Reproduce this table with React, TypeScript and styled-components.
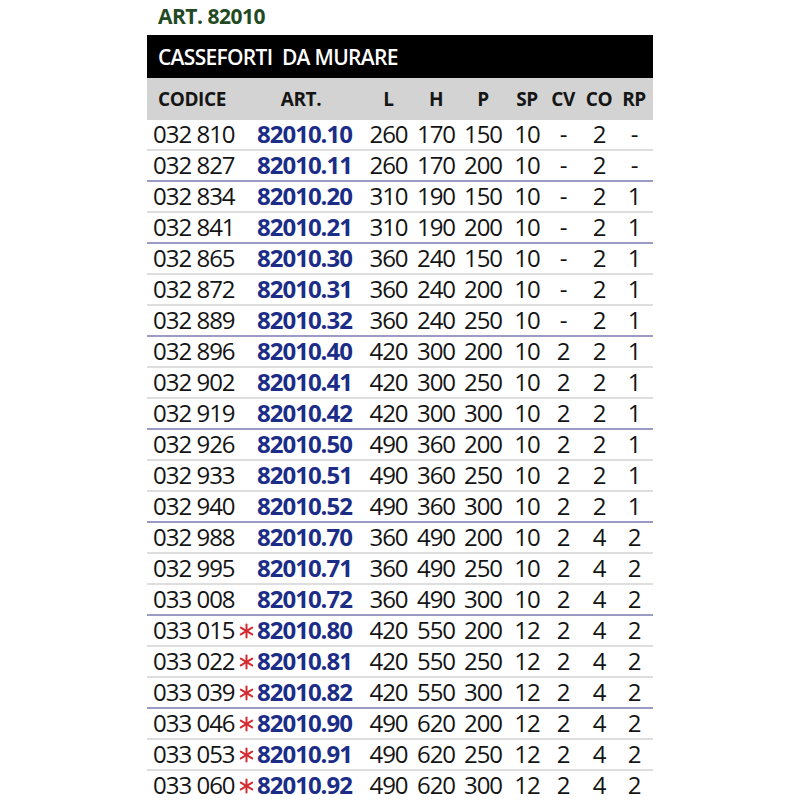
import styled, { createGlobalStyle } from 'styled-components';

const GlobalStyle = createGlobalStyle`
  html, body {
    margin: 0;
    padding: 0;
    background: #ffffff;
  }
  body {
    font-family: "Open Sans", "Noto Sans", sans-serif;
    color: #141414;
  }
`;

const Page = styled.div`
  width: 800px;
  height: 800px;
  overflow: hidden;
  display: flex;
  flex-direction: column;
  align-items: flex-start;
  padding-left: 147px;
  box-sizing: border-box;
`;

const Title = styled.h1`
  margin: 0;
  height: 35px;
  flex-shrink: 0;
  padding-left: 11px;
  font-size: 21px;
  font-weight: 700;
  line-height: 33px;
  letter-spacing: -0.5px;
  color: #1f4a22;
`;

const Table = styled.div`
  width: 506px;
  display: flex;
  flex-direction: column;
  flex-shrink: 0;
`;

const Banner = styled.div`
  height: 43px;
  flex-shrink: 0;
  background: #000000;
  color: #ffffff;
  padding-left: 11px;
  display: flex;
  align-items: center;
  font-size: 21px;
  font-weight: 600;
  letter-spacing: -0.7px;
  white-space: pre;
`;

const cols = '90px 19px 109px 47px 48px 46px 42px 30px 42px 28px';

const HeadRow = styled.div`
  height: 42px;
  flex-shrink: 0;
  background: #d3d3d3;
  display: grid;
  grid-template-columns: ${cols};
  align-items: center;
  font-size: 19px;
  font-weight: 700;
  letter-spacing: -0.4px;
  color: #151515;
`;

const HeadCell = styled.div<{ $span?: number }>`
  grid-column: span ${({ $span }) => $span ?? 1};
  text-align: center;
`;

const Row = styled.div<{ $groupEnd: boolean }>`
  height: 29px;
  flex-shrink: 0;
  display: grid;
  grid-template-columns: ${cols};
  align-items: center;
  font-size: 24px;
  letter-spacing: -1px;
  border-bottom: 2px solid ${({ $groupEnd }) => ($groupEnd ? '#9b9bc6' : '#dedede')};
`;

const Code = styled.div`
  padding-left: 6px;
  white-space: nowrap;
  line-height: 1;
  margin-top: -2px;
`;

const Mark = styled.div`
  display: flex;
  align-items: center;
  justify-content: center;
`;

const Art = styled.div`
  padding-left: 1px;
  font-weight: 700;
  color: #1c2d88;
  line-height: 1;
  margin-top: -2px;
`;

const Num = styled.div`
  text-align: center;
  line-height: 1;
  margin-top: -2px;
`;

const Star = () => (
  <svg width="15" height="16" viewBox="0 0 15 16">
    <g stroke="#d42a30" strokeWidth="2" strokeLinecap="round">
      <line x1="7.5" y1="1.5" x2="7.5" y2="14.5" />
      <line x1="1.8" y1="4.6" x2="13.2" y2="11.4" />
      <line x1="1.8" y1="11.4" x2="13.2" y2="4.6" />
    </g>
  </svg>
);

type Item = {
  code: string;
  art: string;
  l: number;
  h: number;
  p: number;
  sp: number;
  cv: string;
  co: number;
  rp: string;
  star?: boolean;
  end?: boolean;
};

const items: Item[] = [
  { code: '032 810', art: '82010.10', l: 260, h: 170, p: 150, sp: 10, cv: '-', co: 2, rp: '-' },
  { code: '032 827', art: '82010.11', l: 260, h: 170, p: 200, sp: 10, cv: '-', co: 2, rp: '-', end: true },
  { code: '032 834', art: '82010.20', l: 310, h: 190, p: 150, sp: 10, cv: '-', co: 2, rp: '1' },
  { code: '032 841', art: '82010.21', l: 310, h: 190, p: 200, sp: 10, cv: '-', co: 2, rp: '1', end: true },
  { code: '032 865', art: '82010.30', l: 360, h: 240, p: 150, sp: 10, cv: '-', co: 2, rp: '1' },
  { code: '032 872', art: '82010.31', l: 360, h: 240, p: 200, sp: 10, cv: '-', co: 2, rp: '1' },
  { code: '032 889', art: '82010.32', l: 360, h: 240, p: 250, sp: 10, cv: '-', co: 2, rp: '1', end: true },
  { code: '032 896', art: '82010.40', l: 420, h: 300, p: 200, sp: 10, cv: '2', co: 2, rp: '1' },
  { code: '032 902', art: '82010.41', l: 420, h: 300, p: 250, sp: 10, cv: '2', co: 2, rp: '1' },
  { code: '032 919', art: '82010.42', l: 420, h: 300, p: 300, sp: 10, cv: '2', co: 2, rp: '1', end: true },
  { code: '032 926', art: '82010.50', l: 490, h: 360, p: 200, sp: 10, cv: '2', co: 2, rp: '1' },
  { code: '032 933', art: '82010.51', l: 490, h: 360, p: 250, sp: 10, cv: '2', co: 2, rp: '1' },
  { code: '032 940', art: '82010.52', l: 490, h: 360, p: 300, sp: 10, cv: '2', co: 2, rp: '1', end: true },
  { code: '032 988', art: '82010.70', l: 360, h: 490, p: 200, sp: 10, cv: '2', co: 4, rp: '2' },
  { code: '032 995', art: '82010.71', l: 360, h: 490, p: 250, sp: 10, cv: '2', co: 4, rp: '2' },
  { code: '033 008', art: '82010.72', l: 360, h: 490, p: 300, sp: 10, cv: '2', co: 4, rp: '2', end: true },
  { code: '033 015', art: '82010.80', l: 420, h: 550, p: 200, sp: 12, cv: '2', co: 4, rp: '2', star: true },
  { code: '033 022', art: '82010.81', l: 420, h: 550, p: 250, sp: 12, cv: '2', co: 4, rp: '2', star: true },
  { code: '033 039', art: '82010.82', l: 420, h: 550, p: 300, sp: 12, cv: '2', co: 4, rp: '2', star: true, end: true },
  { code: '033 046', art: '82010.90', l: 490, h: 620, p: 200, sp: 12, cv: '2', co: 4, rp: '2', star: true },
  { code: '033 053', art: '82010.91', l: 490, h: 620, p: 250, sp: 12, cv: '2', co: 4, rp: '2', star: true },
  { code: '033 060', art: '82010.92', l: 490, h: 620, p: 300, sp: 12, cv: '2', co: 4, rp: '2', star: true },
];

const App = () => (
  <>
    <GlobalStyle />
    <Page>
      <Title>ART. 82010</Title>
      <Table>
        <Banner>CASSEFORTI  DA MURARE</Banner>
        <HeadRow>
          <HeadCell>CODICE</HeadCell>
          <HeadCell $span={2}>ART.</HeadCell>
          <HeadCell>L</HeadCell>
          <HeadCell>H</HeadCell>
          <HeadCell>P</HeadCell>
          <HeadCell>SP</HeadCell>
          <HeadCell>CV</HeadCell>
          <HeadCell>CO</HeadCell>
          <HeadCell>RP</HeadCell>
        </HeadRow>
        {items.map((it) => (
          <Row key={it.code} $groupEnd={!!it.end}>
            <Code>{it.code}</Code>
            <Mark>{it.star && <Star />}</Mark>
            <Art>{it.art}</Art>
            <Num>{it.l}</Num>
            <Num>{it.h}</Num>
            <Num>{it.p}</Num>
            <Num>{it.sp}</Num>
            <Num>{it.cv}</Num>
            <Num>{it.co}</Num>
            <Num>{it.rp}</Num>
          </Row>
        ))}
      </Table>
    </Page>
  </>
);

export default App;
